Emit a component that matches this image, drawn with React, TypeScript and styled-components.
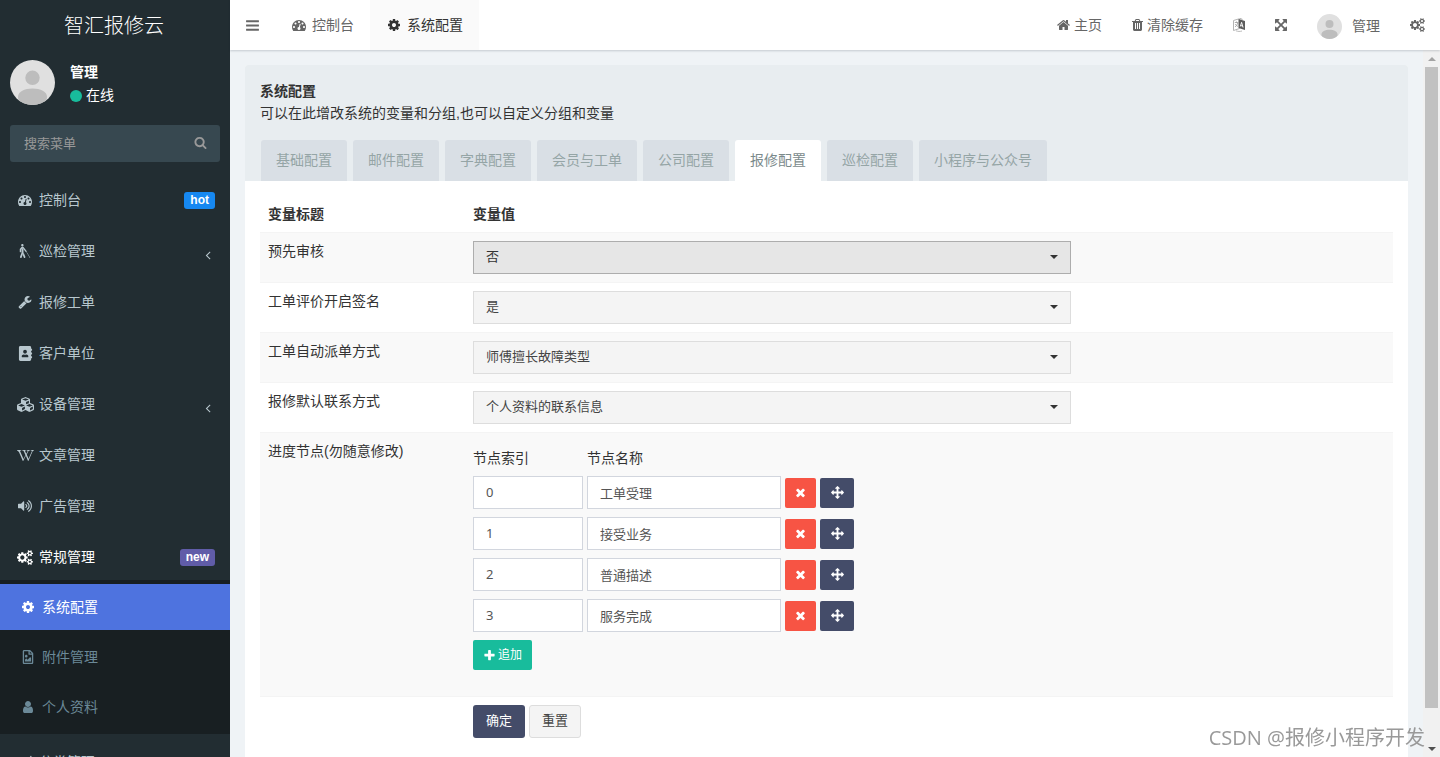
import React, { useState } from "react";
import styled, { createGlobalStyle, css } from "styled-components";
import {
  FaAddressBook,
  FaBlind,
  FaCubes,
  FaLeaf,
  FaRegFileImage,
  FaVolumeUp,
  FaWikipediaW,
} from "react-icons/fa";

const GlobalStyle = createGlobalStyle`
  *, *::before, *::after { box-sizing: border-box; }
  body {
    margin: 0;
    color: #333;
    background: #eff3f6;
    font: 14px/20px "Liberation Sans", "Noto Sans CJK SC", sans-serif;
  }
  button, input, select { font-family: inherit; margin: 0; }
  a { color: inherit; text-decoration: none; }
  ul { list-style: none; margin: 0; padding: 0; }
`;

/* ---------- icons ---------- */

const SMALL_GEAR =
  "q0 16-149 31-12 27-30 52 51 113 51 138 0 4-4 7-122 71-124 71-8 0-46-47t-52-68q-20 2-30 2t-30-2q-14 21-52 68t-46 47q-2 0-124-71-4-3-4-7 0-25 51-138-18-25-30-52-149-15-149-31v-140q0-16 149-31 13-29 30-52-51-113-51-138 0-4 4-7 4-2 35-20t59-34 30-16q8 0 46 46.500t52 67.500q20-2 30-2t30 2q51-71 92-112l6-2q4 0 124 70 4 3 4 7 0 25-51 138 17 23 30 52 149 15 149 31z";

const PATHS = {
  dashboard:
    "M384 1152q0-53-37.500-90.500t-90.500-37.500-90.500 37.500-37.500 90.500 37.500 90.500 90.500 37.500 90.500-37.500 37.500-90.500zm192-448q0-53-37.500-90.500t-90.500-37.500-90.500 37.500-37.500 90.500 37.500 90.500 90.500 37.500 90.500-37.500 37.500-90.500zm428 481l101-382q6-26-7.500-48.500t-38.500-29.500-48 6.500-30 39.500l-101 382q-60 5-107 43.500t-63 98.500q-20 77 20 146t117 89 146-20 89-117q16-60-6-117t-72-91zm660-33q0-53-37.500-90.500t-90.500-37.500-90.500 37.500-37.500 90.500 37.500 90.500 90.500 37.500 90.500-37.500 37.500-90.500zm-640-640q0-53-37.500-90.500t-90.500-37.500-90.500 37.500-37.500 90.500 37.500 90.500 90.500 37.500 90.500-37.500 37.500-90.500zm448 192q0-53-37.500-90.500t-90.500-37.500-90.500 37.500-37.500 90.500 37.500 90.500 90.500 37.500 90.500-37.500 37.500-90.500zm320 448q0 261-141 483-19 29-54 29h-1402q-35 0-54-29-141-221-141-483 0-182 71-348t191-286 286-191 348-71 348 71 286 191 191 286 71 348z",
  cog: "M1152 896q0-106-75-181t-181-75-181 75-75 181 75 181 181 75 181-75 75-181zm512-109v222q0 12-8 23t-20 13l-185 28q-19 54-39 91 35 50 107 138 10 12 10 25t-9 23q-27 37-99 108t-94 71q-12 0-26-9l-138-108q-44 23-91 38-16 136-29 186-7 28-36 28h-222q-14 0-24.500-8.500t-11.500-21.500l-28-184q-49-16-90-37l-141 107q-10 9-25 9-14 0-25-11-126-114-165-168-7-10-7-23 0-12 8-23 15-21 51-66.500t54-70.500q-27-50-41-99l-183-27q-13-2-21-12.500t-8-23.500v-222q0-12 8-23t19-13l186-28q14-46 39-92-40-57-107-138-10-12-10-24 0-10 9-23 26-36 98.500-107.500t94.500-71.500q13 0 26 10l138 107q44-23 91-38 16-136 29-186 7-28 36-28h222q14 0 24.500 8.500t11.500 21.500l28 184q49 16 90 37l142-107q9-9 24-9 13 0 25 10 129 119 165 170 7 8 7 22 0 12-8 23-15 21-51 66.500t-54 70.500q26 50 41 98l183 28q13 2 21 12.500t8 23.500z",
  cogs:
    "M896 896q0-106-75-181t-181-75-181 75-75 181 75 181 181 75 181-75 75-181zm768 512q0-52-38-90t-90-38-90 38-38 90q0 53 37.500 90.500t90.500 37.500 90.500-37.500 37.500-90.500zm0-1024q0-52-38-90t-90-38-90 38-38 90q0 53 37.500 90.500t90.500 37.500 90.500-37.500 37.500-90.500zm-384 421v185q0 10-7 19.500t-16 10.500l-155 24q-11 35-32 76 34 48 90 115 7 11 7 20 0 12-7 19-23 30-82.500 89.500t-78.500 59.500q-11 0-21-7l-115-90q-37 19-77 31-11 108-23 155-7 24-30 24h-186q-11 0-20-7.500t-10-17.500l-23-153q-34-10-75-31l-118 89q-7 7-20 7-11 0-21-8-144-133-144-160 0-9 7-19 10-14 41-53t47-61q-23-44-35-82l-152-24q-10-1-17-9.500t-7-19.500v-185q0-10 7-19.500t16-10.500l155-24q11-35 32-76-34-48-90-115-7-11-7-20 0-12 7-20 22-30 82-89t79-59q11 0 21 7l115 90q34-18 77-32 11-108 23-154 7-24 30-24h186q11 0 20 7.500t10 17.500l23 153q34 10 75 31l118-89q8-7 20-7 11 0 21 8 144 133 144 160 0 8-7 19-12 16-42 54t-45 60q23 48 34 82l152 23q10 2 17 10.500t7 19.500zM1920 1338v140" +
    SMALL_GEAR +
    "M1920 314v140" +
    SMALL_GEAR,
  wrench:
    "M448 1472q0-26-19-45t-45-19-45 19-19 45 19 45 45 19 45-19 19-45zm644-420l-682 682q-37 37-90 37-52 0-91-37l-106-108q-38-36-38-90 0-53 38-91l681-681q39 98 114.500 173.500t173.500 114.500zm634-435q0 39-23 106-47 134-164.500 217.500t-258.500 83.500q-185 0-316.500-131.500t-131.500-316.500 131.500-316.500 316.500-131.500q58 0 121.500 16.500t107.500 46.500q16 11 16 28t-16 28l-293 169v224l193 107q5-3 79-48.500t135.500-81 70.500-35.500q15 0 23.500 10t8.500 25z",
  user: "M1536 1399q0 109-62.500 187t-150.500 78h-854q-88 0-150.500-78t-62.500-187q0-85 8.500-160.500t31.500-152 58.500-131 94-89 134.500-34.500q131 128 313 128t313-128q76 0 134.500 34.500t94 89 58.500 131 31.500 152 8.500 160.500zm-256-887q0 159-112.500 271.500t-271.500 112.500-271.500-112.500-112.500-271.500 112.500-271.500 271.500-112.500 271.500 112.500 112.500 271.500z",
  home: "M1472 992v480q0 26-19 45t-45 19h-384v-384h-256v384h-384q-26 0-45-19t-19-45v-480q0-1 .5-3t.5-3l575-474 575 474q1 2 1 6zm223-69l-62 74q-8 9-21 11h-3q-13 0-21-7l-692-577-692 577q-12 8-24 7-13-2-21-11l-62-74q-8-10-7-23.500t11-21.500l719-599q32-26 76-26t76 26l244 204v-195q0-14 9-23t23-9h192q14 0 23 9t9 23v408l219 182q10 8 11 21.500t-7 23.500z",
  trash:
    "M704 1376v-704q0-14-9-23t-23-9h-64q-14 0-23 9t-9 23v704q0 14 9 23t23 9h64q14 0 23-9t9-23zm256 0v-704q0-14-9-23t-23-9h-64q-14 0-23 9t-9 23v704q0 14 9 23t23 9h64q14 0 23-9t9-23zm256 0v-704q0-14-9-23t-23-9h-64q-14 0-23 9t-9 23v704q0 14 9 23t23 9h64q14 0 23-9t9-23zm-544-992h448l-48-117q-7-9-17-11h-317q-10 2-17 11zm928 32v64q0 14-9 23t-23 9h-96v948q0 83-47 143.500t-113 60.500h-832q-66 0-113-58.500t-47-141.500v-952h-96q-14 0-23-9t-9-23v-64q0-14 9-23t23-9h309l70-167q15-37 54-63t79-26h320q40 0 79 26t54 63l70 167h309q14 0 23 9t9 23z",
  expand:
    "M1411 541l-355 355 355 355 144-144q29-31 70-14 39 17 39 59v448q0 26-19 45t-45 19h-448q-42 0-59-40-17-39 14-69l144-144-355-355-355 355 144 144q31 30 14 69-17 40-59 40h-448q-26 0-45-19t-19-45v-448q0-42 40-59 39-17 69 14l144 144 355-355-355-355-144 144q-19 19-45 19-12 0-24-5-40-17-40-59v-448q0-26 19-45t45-19h448q42 0 59 40 17 39-14 69l-144 144 355 355 355-355-144-144q-31-30-14-69 17-40 59-40h448q26 0 45 19t19 45v448q0 42-39 59-13 5-25 5-26 0-45-19z",
  bars: "M1664 1344v128q0 26-19 45t-45 19h-1408q-26 0-45-19t-19-45v-128q0-26 19-45t45-19h1408q26 0 45 19t19 45zm0-512v128q0 26-19 45t-45 19h-1408q-26 0-45-19t-19-45v-128q0-26 19-45t45-19h1408q26 0 45 19t19 45zm0-512v128q0 26-19 45t-45 19h-1408q-26 0-45-19t-19-45v-128q0-26 19-45t45-19h1408q26 0 45 19t19 45z",
  search:
    "M1216 832q0-185-131.500-316.500t-316.500-131.500-316.500 131.500-131.500 316.500 131.500 316.500 316.500 131.500 316.500-131.500 131.500-316.500zm512 832q0 52-38 90t-90 38q-54 0-90-38l-343-342q-179 124-399 124-143 0-273.500-55.500t-225-150-150-225-55.500-273.500 55.500-273.500 150-225 225-150 273.500-55.500 273.500 55.500 225 150 150 225 55.500 273.500q0 220-124 399l343 343q37 37 37 90z",
  times:
    "M1490 1322q0 40-28 68l-136 136q-28 28-68 28t-68-28l-294-294-294 294q-28 28-68 28t-68-28l-136-136q-28-28-28-68t28-68l294-294-294-294q-28-28-28-68t28-68l136-136q28-28 68-28t68 28l294 294 294-294q28-28 68-28t68 28l136 136q28 28 28 68t-28 68l-294 294 294 294q28 28 28 68z",
  plus: "M1600 736v192q0 40-28 68t-68 28h-416v416q0 40-28 68t-68 28h-192q-40 0-68-28t-28-68v-416h-416q-40 0-68-28t-28-68v-192q0-40 28-68t68-28h416v-416q0-40 28-68t68-28h192q40 0 68 28t28 68v416h416q40 0 68 28t28 68z",
  arrows:
    "M1792 896q0 26-19 45l-256 256q-19 19-45 19t-45-19-19-45v-128h-384v384h128q26 0 45 19t19 45-19 45l-256 256q-19 19-45 19t-45-19l-256-256q-19-19-19-45t19-45 45-19h128v-384h-384v128q0 26-19 45t-45 19-45-19l-256-256q-19-19-19-45t19-45l256-256q19-19 45-19t45 19 19 45v128h384v-384h-128q-26 0-45-19t-19-45 19-45l256-256q19-19 45-19t45 19l256 256q19 19 19 45t-19 45-45 19h-128v384h384v-128q0-26 19-45t45-19 45 19l256 256q19 19 19 45z",
  angleLeft:
    "M1203 544q0 13-10 23l-393 393 393 393q10 10 10 23t-10 23l-50 50q-10 10-23 10t-23-10l-466-466q-10-10-10-23t10-23l466-466q10-10 23-10t23 10l50 50q10 10 10 23z",
};

type IconName = keyof typeof PATHS;

const Svg = styled.svg`
  display: block;
  flex: none;
  fill: currentColor;
`;

const BOXES: Partial<Record<IconName, string>> = {
  cogs: "0 0 1920 1792",
  home: "64 0 1664 1792",
  trash: "192 0 1408 1792",
  expand: "128 0 1536 1792",
};

function Icon({ name, size = 14, width }: { name: IconName; size?: number; width?: number }) {
  return (
    <Svg viewBox={BOXES[name] ?? "0 0 1792 1792"} width={width ?? size} height={size} aria-hidden>
      <path d={PATHS[name]} />
    </Svg>
  );
}

function LanguageIcon() {
  return (
    <Svg viewBox="0 0 12 14" width={12} height={14} aria-hidden>
      <path d="M.5 2.500 6.500.7v9.800L.5 12.500z" fill="none" stroke="#b4b4b4" />
      <path d="M1.800 4.500h3.400M3.500 3.500v1M2 8.800c1.500-.8 2.300-2 2.600-3.800M2.300 6c.6 1.200 1.400 2 2.700 2.500" fill="none" stroke="#999" strokeWidth=".8" />
      <path d="M5.500 1 12 3v9L5.500 10z" fill="#5c5c5c" />
      <path d="m7.300 8.500 1.300-4.200 1.500 5.200M7.700 7.500l2 .6" fill="none" stroke="#fff" strokeWidth=".9" />
      <path d="M3 12.800c2 .8 4 .8 6 .2" fill="none" stroke="#aaa" strokeWidth=".8" />
      <path d="M7 .6 9.500 1.400" stroke="#888" strokeWidth=".8" />
    </Svg>
  );
}

function Avatar({ size }: { size: number }) {
  return (
    <Svg viewBox="0 0 45 45" width={size} height={size} role="img" aria-label="管理">
      <defs>
        <clipPath id={`avatar-${size}`}>
          <circle cx="22.500" cy="22.500" r="22.500" />
        </clipPath>
      </defs>
      <g clipPath={`url(#avatar-${size})`}>
        <rect width="45" height="45" fill="#e0e0e0" />
        <circle cx="22.500" cy="17.800" r="7.200" fill="#bdbdbd" />
        <path d="M8 37c0-5.500 6.500-8.500 14.500-8.500S37 31.500 37 37c0 3.500-2.500 8-5 8h-19c-3 0-5-4.500-5-8z" fill="#bdbdbd" />
      </g>
    </Svg>
  );
}

/* ---------- shell ---------- */

const Shell = styled.div`
  display: flex;
  height: 100vh;
  overflow: hidden;
`;

const Sidebar = styled.aside`
  flex: none;
  width: 230px;
  overflow: hidden;
  background: #222d32;
  color: #b8c7ce;
`;

const Logo = styled.a`
  display: block;
  height: 50px;
  padding: 1px 2px 0 0;
  color: #fff;
  font-size: 20px;
  font-weight: 300;
  line-height: 50px;
  text-align: center;
`;

const UserPanel = styled.div`
  display: flex;
  gap: 15px;
  height: 65px;
  padding: 10px;
  color: #fff;
`;

const UserInfo = styled.div`
  display: flex;
  flex-direction: column;
  padding-top: 1px;
  line-height: 23px;
`;

const Status = styled.span`
  display: flex;
  align-items: center;
  gap: 4px;

  &::before {
    content: "";
    width: 12px;
    height: 12px;
    border-radius: 50%;
    background: #18bc9c;
  }
`;

const SearchForm = styled.form`
  display: flex;
  height: 37px;
  margin: 10px 10px 15px;
  border-radius: 3px;
  background: #374850;
`;

const SearchInput = styled.input`
  flex: 1;
  min-width: 0;
  padding: 0 14px;
  border: 0;
  background: transparent;
  color: #fff;
  font-size: 13px;

  &::placeholder { color: #999; }
`;

const SearchButton = styled.button`
  display: grid;
  place-items: center;
  width: 40px;
  padding: 0 0 2px;
  border: 0;
  background: transparent;
  color: #999;
`;

const Menu = styled.ul`
  display: flex;
  flex-direction: column;
`;

const MenuItem = styled.li<{ $open?: boolean }>`
  margin-bottom: ${(p) => (p.$open ? 0 : 5)}px;
`;

const MenuLink = styled.a<{ $active?: boolean }>`
  display: flex;
  align-items: center;
  gap: 5px;
  height: 46px;
  padding: 0 15px 0 16px;
  color: ${(p) => (p.$active ? "#fff" : "inherit")};
`;

const IconSlot = styled.span`
  display: flex;
  flex: none;
  justify-content: center;
  width: 18px;
`;

const BoldGlyph = styled(IconSlot)`
  stroke: currentColor;
  stroke-width: 14;

  svg { overflow: visible; }
`;

const Badge = styled.small<{ $color: string }>`
  margin-left: auto;
  padding: 0 6px;
  border-radius: 3px;
  background: ${(p) => p.$color};
  color: #fff;
  font-size: 12px;
  font-weight: 700;
  line-height: 17px;
`;

const Chevron = styled.span`
  display: flex;
  margin-left: auto;
  padding-top: 8px;
`;

const SubMenu = styled.ul`
  display: flex;
  flex-direction: column;
  gap: 4px;
  margin-bottom: 5px;
  padding: 4px 0;
  background: #181f22;
`;

const SubLink = styled(MenuLink)`
  padding-left: 19px;
  color: ${(p) => (p.$active ? "#fff" : "#6b8998")};
  background: ${(p) => (p.$active ? "#4e73df" : "transparent")};
`;

const Main = styled.div`
  display: flex;
  flex: 1;
  flex-direction: column;
  min-width: 0;
`;

const TopBar = styled.header`
  display: flex;
  flex: none;
  justify-content: space-between;
  height: 50px;
  background: #fff;
  box-shadow: 0 1px 2px rgba(0, 21, 41, 0.18);
  color: #666;
  z-index: 1;
`;

const NavGroup = styled.nav`
  display: flex;
`;

const navItem = css`
  display: flex;
  align-items: center;
  gap: 4px;
  height: 50px;
  padding: 0 15px;
`;

const NavLink = styled.a`
  ${navItem}
`;

const NavButton = styled.button`
  ${navItem}
  border: 0;
  background: transparent;
  color: inherit;
  font-size: 14px;
`;

const ProfileButton = styled(NavButton)`
  gap: 10px;

  svg { margin-top: 3px; }
`;

const PageTab = styled(NavLink)<{ $active?: boolean }>`
  padding-right: 16px;
  background: ${(p) => (p.$active ? "#fafafa" : "transparent")};
  color: ${(p) => (p.$active ? "#333" : "inherit")};
`;

/* ---------- content ---------- */

const Viewport = styled.div`
  display: flex;
  flex: 1;
  min-height: 0;
`;

const Content = styled.main`
  flex: 1;
  min-width: 0;
  overflow: hidden;
  padding: 15px 15px 0;
`;

const ScrollTrack = styled.div`
  display: flex;
  flex: none;
  flex-direction: column;
  align-items: center;
  justify-content: space-between;
  width: 17px;
  padding: 7px 0 6px;
  background: #f1f1f1;
`;

const ScrollThumb = styled.div`
  flex: 1;
  width: 13px;
  margin: 6px 0 39px;
  background: #c1c1c1;
`;

const Arrow = styled.span<{ $up?: boolean }>`
  border: 4px solid transparent;
  ${(p) => (p.$up ? "border-top: 0; border-bottom-color: #a3a3a3;" : "border-bottom: 0; border-top-color: #505050;")}
`;

const Panel = styled.section`
  min-height: 100%;
  border-radius: 3px 3px 0 0;
  background: #fff;
  overflow: hidden;
`;

const PanelHeading = styled.div`
  padding: 15px 15px 0;
  background: #e8edf0;
`;

const Lead = styled.div`
  margin-bottom: 16px;
  line-height: 22px;
`;

const Tabs = styled.div`
  display: flex;
  gap: 6px;
  padding: 0 1px;
`;

const Tab = styled.button<{ $active: boolean }>`
  height: 41px;
  padding: 0 15px 2px;
  border: 0;
  border-radius: 3px 3px 0 0;
  background: ${(p) => (p.$active ? "#fff" : "#d9dfe5")};
  color: ${(p) => (p.$active ? "#7b8a8b" : "#95a5a6")};
  font-size: 14px;
  line-height: 20px;
  white-space: nowrap;
`;

const PanelBody = styled.form`
  padding: 15px;
`;

const Table = styled.table`
  width: 100%;
  border-collapse: separate;
  border-spacing: 0;
  table-layout: fixed;
`;

const HeadCell = styled.th<{ $width?: string }>`
  width: ${(p) => p.$width ?? "auto"};
  padding: 8px;
  border-bottom: 1px solid #f4f4f4;
  text-align: left;
`;

const Row = styled.tr`
  tbody &:nth-child(odd) { background: #f9f9f9; }
`;

const Cell = styled.td`
  padding: 8px;
  border-top: 1px solid #f4f4f4;
  vertical-align: top;

  tbody tr:first-child & { border-top: 0; }
`;

const SelectBox = styled.div`
  position: relative;
  width: calc((100% - 15px) * 2 / 3);
`;

const Select = styled.select<{ $focused?: boolean }>`
  display: block;
  width: 100%;
  height: 33px;
  padding: 0 32px 2px 12px;
  border: 1px solid ${(p) => (p.$focused ? "#adadad" : "#ddd")};
  border-radius: 0;
  appearance: none;
  background: ${(p) => (p.$focused ? "#e6e6e6" : "#f4f4f4")};
  color: ${(p) => (p.$focused ? "#333" : "#444")};
  font-size: 13px;
`;

const Caret = styled.span`
  position: absolute;
  top: 14px;
  right: 13px;
  border: 4px solid transparent;
  border-top-color: #333;
  border-bottom: 0;
  pointer-events: none;
`;

const NodeList = styled.div`
  display: flex;
  flex-direction: column;
  align-items: flex-start;
  gap: 8px;
  margin-bottom: 18px;
`;

const NodeRow = styled.div`
  display: grid;
  grid-template-columns: 110px 194px 31px 34px;
  align-items: center;
  gap: 4px;
`;

const NodeHead = styled(NodeRow)`
  height: 27px;
  padding-top: 7px;
`;

const TextInput = styled.input`
  width: 100%;
  height: 33px;
  padding: 0 12px;
  border: 1px solid #d2d6de;
  border-radius: 0;
  background: #fff;
  color: #555;
  font: 13px/20px "Noto Sans", "Noto Sans CJK SC", sans-serif;
`;

const IndexInput = styled(TextInput)`
  padding-bottom: 2px;
`;

const Button = styled.button<{ $tone: "danger" | "primary" | "success" | "plain"; $large?: boolean }>`
  display: inline-flex;
  align-items: center;
  justify-content: center;
  gap: 2px;
  height: ${(p) => (p.$large ? 33 : 30)}px;
  padding: 0 ${(p) => (p.$large ? "12px 2px" : "9px")};
  border: 1px solid ${(p) => (p.$tone === "plain" ? "#ddd" : "transparent")};
  border-radius: ${(p) => (p.$large ? 3 : 2)}px;
  background: ${(p) => ({ danger: "#f75444", primary: "#444c69", success: "#18bc9c", plain: "#f4f4f4" })[p.$tone]};
  color: ${(p) => (p.$tone === "plain" ? "#444" : "#fff")};
  font-size: ${(p) => (p.$large ? 13 : 12)}px;
  line-height: 18px;
`;

const IconButton = styled(Button)`
  width: 100%;
  padding: 0;
`;

const Actions = styled.div`
  display: flex;
  gap: 4px;
`;

const Watermark = styled.div`
  position: fixed;
  right: 15px;
  bottom: 4px;
  z-index: 2;
  color: #999;
  font: 20px/30px "Open Sans", "Noto Sans CJK SC", sans-serif;
  pointer-events: none;
`;

/* ---------- data ---------- */

type Entry = { label: string; icon: React.ReactNode; badge?: [string, string]; more?: boolean };

const MENU: Entry[] = [
  { label: "控制台", icon: <IconSlot><Icon name="dashboard" /></IconSlot>, badge: ["hot", "#1688f1"] },
  { label: "巡检管理", icon: <BoldGlyph><FaBlind size={14} /></BoldGlyph>, more: true },
  { label: "报修工单", icon: <IconSlot><Icon name="wrench" /></IconSlot> },
  { label: "客户单位", icon: <IconSlot><FaAddressBook size={15} /></IconSlot> },
  { label: "设备管理", icon: <IconSlot><FaCubes size={17} /></IconSlot>, more: true },
  { label: "文章管理", icon: <BoldGlyph><FaWikipediaW size={17} /></BoldGlyph> },
  { label: "广告管理", icon: <IconSlot><FaVolumeUp size={14} /></IconSlot> },
];

const TABS = ["基础配置", "邮件配置", "字典配置", "会员与工单", "公司配置", "报修配置", "巡检配置", "小程序与公众号"];

const SETTINGS = [
  { id: "audit", label: "预先审核", options: ["否", "是"] },
  { id: "sign", label: "工单评价开启签名", options: ["是", "否"] },
  { id: "dispatch", label: "工单自动派单方式", options: ["师傅擅长故障类型"] },
  { id: "contact", label: "报修默认联系方式", options: ["个人资料的联系信息"] },
];

const NODES = ["工单受理", "接受业务", "普通描述", "服务完成"];

export default function App() {
  const [tab, setTab] = useState("报修配置");

  return (
    <>
      <GlobalStyle />
      <Shell>
        <Sidebar>
          <Logo href="#">智汇报修云</Logo>
          <UserPanel>
            <Avatar size={45} />
            <UserInfo>
              <strong>管理</strong>
              <Status>在线</Status>
            </UserInfo>
          </UserPanel>
          <SearchForm onSubmit={(e) => e.preventDefault()}>
            <SearchInput placeholder="搜索菜单" aria-label="搜索菜单" />
            <SearchButton type="submit" aria-label="搜索">
              <Icon name="search" size={13} />
            </SearchButton>
          </SearchForm>
          <Menu>
            {MENU.map((m) => (
              <MenuItem key={m.label}>
                <MenuLink href="#">
                  {m.icon}
                  {m.label}
                  {m.badge && <Badge $color={m.badge[1]}>{m.badge[0]}</Badge>}
                  {m.more && (
                    <Chevron>
                      <Icon name="angleLeft" />
                    </Chevron>
                  )}
                </MenuLink>
              </MenuItem>
            ))}
            <MenuItem $open>
              <MenuLink href="#" $active>
                <IconSlot>
                  <Icon name="cogs" size={15} width={16} />
                </IconSlot>
                常规管理
                <Badge $color="#605ca8">new</Badge>
              </MenuLink>
              <SubMenu>
                <li>
                  <SubLink href="#" $active>
                    <IconSlot>
                      <Icon name="cog" />
                    </IconSlot>
                    系统配置
                  </SubLink>
                </li>
                <li>
                  <SubLink href="#">
                    <BoldGlyph>
                      <FaRegFileImage size={14} />
                    </BoldGlyph>
                    附件管理
                  </SubLink>
                </li>
                <li>
                  <SubLink href="#">
                    <IconSlot>
                      <Icon name="user" />
                    </IconSlot>
                    个人资料
                  </SubLink>
                </li>
              </SubMenu>
            </MenuItem>
            <MenuItem>
              <MenuLink href="#">
                <IconSlot>
                  <FaLeaf size={14} />
                </IconSlot>
                分类管理
              </MenuLink>
            </MenuItem>
          </Menu>
        </Sidebar>

        <Main>
          <TopBar>
            <NavGroup>
              <NavButton type="button" aria-label="切换菜单">
                <Icon name="bars" size={15} />
              </NavButton>
              <PageTab href="#">
                <IconSlot>
                  <Icon name="dashboard" />
                </IconSlot>
                控制台
              </PageTab>
              <PageTab href="#" $active>
                <IconSlot>
                  <Icon name="cog" />
                </IconSlot>
                系统配置
              </PageTab>
            </NavGroup>
            <NavGroup>
              <NavLink href="#">
                <Icon name="home" width={13} />
                主页
              </NavLink>
              <NavLink href="#">
                <Icon name="trash" width={11} />
                清除缓存
              </NavLink>
              <NavButton type="button" aria-label="语言">
                <LanguageIcon />
              </NavButton>
              <NavButton type="button" aria-label="全屏">
                <Icon name="expand" width={12} />
              </NavButton>
              <ProfileButton type="button">
                <Avatar size={25} />
                管理
              </ProfileButton>
              <NavButton type="button" aria-label="设置">
                <Icon name="cogs" width={15} />
              </NavButton>
            </NavGroup>
          </TopBar>

          <Viewport>
            <Content>
              <Panel>
                <PanelHeading>
                  <Lead>
                    <strong>系统配置</strong>
                    <div>可以在此增改系统的变量和分组,也可以自定义分组和变量</div>
                  </Lead>
                  <Tabs role="tablist">
                    {TABS.map((t) => (
                      <Tab key={t} type="button" role="tab" aria-selected={t === tab} $active={t === tab} onClick={() => setTab(t)}>
                        {t}
                      </Tab>
                    ))}
                  </Tabs>
                </PanelHeading>
                <PanelBody onSubmit={(e) => e.preventDefault()}>
                  <Table>
                    <thead>
                      <tr>
                        <HeadCell $width="205px">变量标题</HeadCell>
                        <HeadCell>变量值</HeadCell>
                      </tr>
                    </thead>
                    <tbody>
                      {SETTINGS.map((s, i) => (
                        <Row key={s.id}>
                          <Cell>
                            <label htmlFor={s.id}>{s.label}</label>
                          </Cell>
                          <Cell>
                            <SelectBox>
                              <Select id={s.id} $focused={i === 0}>
                                {s.options.map((o) => (
                                  <option key={o}>{o}</option>
                                ))}
                              </Select>
                              <Caret />
                            </SelectBox>
                          </Cell>
                        </Row>
                      ))}
                      <Row>
                        <Cell>进度节点(勿随意修改)</Cell>
                        <Cell>
                          <NodeList>
                            <NodeHead>
                              <span>节点索引</span>
                              <span>节点名称</span>
                            </NodeHead>
                            {NODES.map((n, i) => (
                              <NodeRow key={n}>
                                <IndexInput defaultValue={i} aria-label="节点索引" />
                                <TextInput defaultValue={n} aria-label="节点名称" />
                                <IconButton type="button" $tone="danger" aria-label="删除">
                                  <Icon name="times" size={13} />
                                </IconButton>
                                <IconButton type="button" $tone="primary" aria-label="移动">
                                  <Icon name="arrows" size={13} />
                                </IconButton>
                              </NodeRow>
                            ))}
                            <Button type="button" $tone="success">
                              <Icon name="plus" size={13} />
                              追加
                            </Button>
                          </NodeList>
                        </Cell>
                      </Row>
                    </tbody>
                    <tfoot>
                      <tr>
                        <Cell />
                        <Cell>
                          <Actions>
                            <Button type="submit" $tone="primary" $large>
                              确定
                            </Button>
                            <Button type="reset" $tone="plain" $large>
                              重置
                            </Button>
                          </Actions>
                        </Cell>
                      </tr>
                    </tfoot>
                  </Table>
                </PanelBody>
              </Panel>
            </Content>
            <ScrollTrack aria-hidden>
              <Arrow $up />
              <ScrollThumb />
              <Arrow />
            </ScrollTrack>
          </Viewport>
        </Main>
      </Shell>
      <Watermark>CSDN @报修小程序开发</Watermark>
    </>
  );
}
